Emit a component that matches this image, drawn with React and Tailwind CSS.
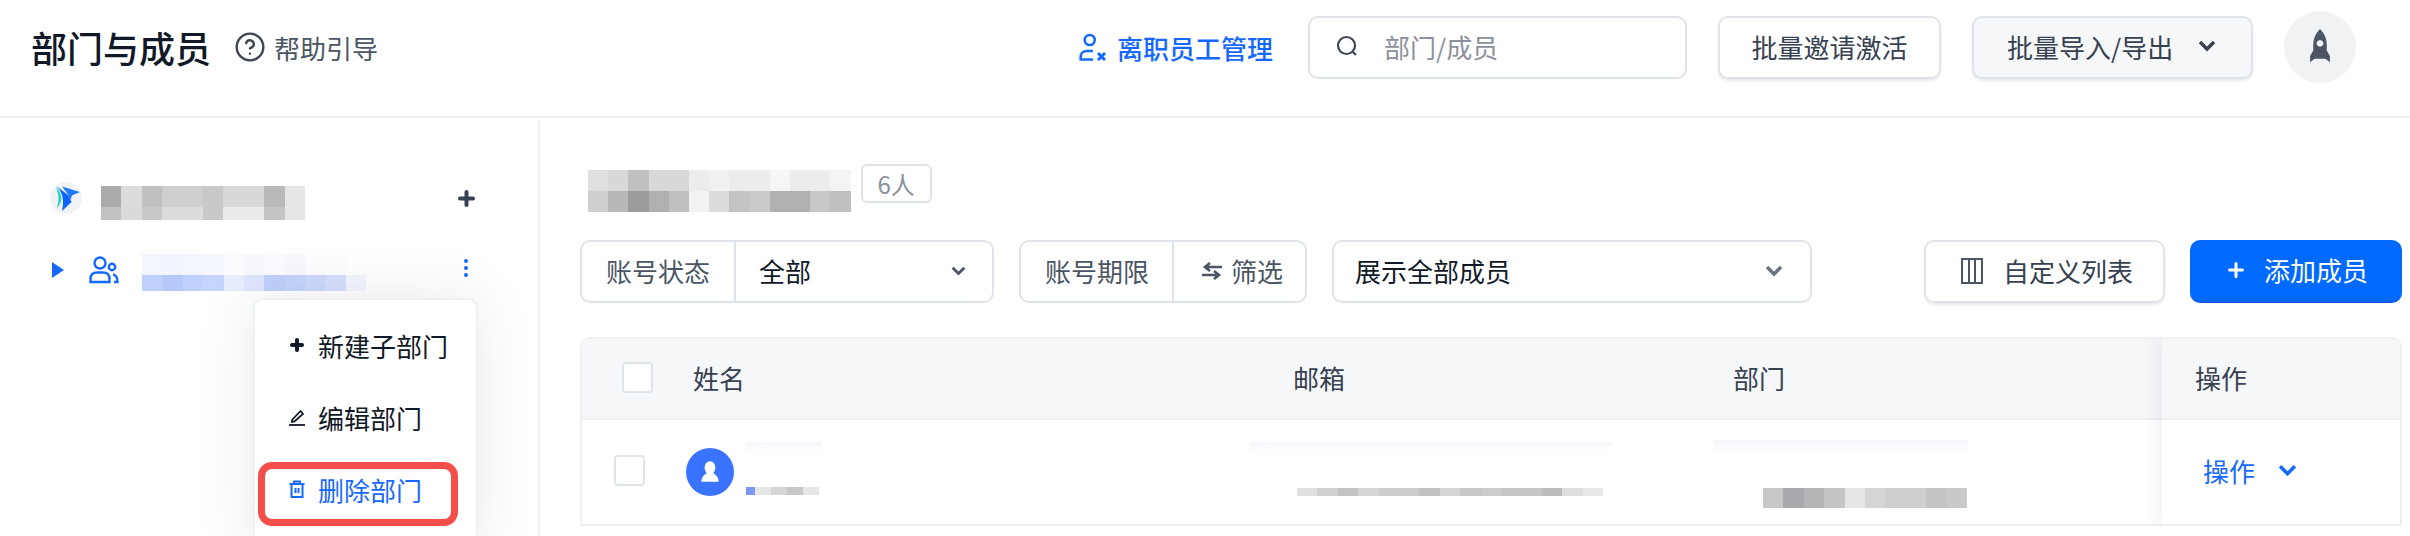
import { CircleHelp } from 'lucide-react'

const FONT = "font-['Noto_Sans_CJK_SC','Noto_Sans',sans-serif]"

// pixelated (redacted) text blocks: each row is [height, colours]
function Mosaic({ rows, cell = 20.4 }) {
  const width = Math.max(...rows.map(r => r[1].length)) * cell
  const height = rows.reduce((sum, r) => sum + r[0], 0)
  let y = 0
  return (
    <svg width={width} height={height} className="block shrink-0" shapeRendering="crispEdges">
      {rows.map(([h, colours], ri) => {
        const top = y
        y += h
        return colours.map((c, i) => <rect key={`${ri}-${i}`} x={i * cell} y={top} width={cell + 0.5} height={h} fill={c} />)
      })}
    </svg>
  )
}

const ORG_NAME = [
  [21, ['#ababab', '#dcdcdc', '#c0c0c0', '#cfcfcf', '#cfcfcf', '#c9c9c9', '#d8d8d8', '#d8d8d8', '#b9b9b9', '#e6e6e6']],
  [13, ['#c2c2c2', '#dadada', '#c8c8c8', '#dcdcdc', '#dcdcdc', '#c9c9c9', '#ebebeb', '#ebebeb', '#c4c4c4', '#e6e6e6']],
]
const DEPT_NAME = [
  [21, ['#f3f5ff', '#f2f5ff', '#f3f5ff', '#f5f7ff', '#fcfcff', '#f7f9ff', '#fbfbff', '#f7f9ff', '#fdfdff', '#fdfdff', '#ffffff']],
  [16, ['#c0d0fc', '#b6c9fb', '#c0d0fc', '#c5d4fc', '#e9eefe', '#dfe6fd', '#c0d0fc', '#c5d4fc', '#cdd9fc', '#d6e0fd', '#f4f6fe']],
]
const TITLE = [
  [21, ['#e0e0e0', '#d8d8d8', '#c0c0c0', '#d8d8d8', '#d8d8d8', '#ececec', '#f0f0f0', '#ececec', '#ececec', '#f6f6f6', '#ececec', '#ececec', '#f4f4f4']],
  [21, ['#cfcfcf', '#b8b8b8', '#9c9c9c', '#b0b0b0', '#c0c0c0', '#f2f2f2', '#dcdcdc', '#c4c4c4', '#cacaca', '#b0b0b0', '#b0b0b0', '#c8c8c8', '#c0c0c0']],
]
const ROW_NAME = [[8, ['#e6e6e6', '#d6d6d6', '#c8c8c8', '#e6e6e6']]]
const ROW_EMAIL = [[8, ['#e0e0e0', '#d0d0d0', '#c4c4c4', '#d6d6d6', '#cccccc', '#cccccc', '#c2c2c2', '#d4d4d4', '#c8c8c8', '#cccccc', '#c6c6c6', '#c6c6c6', '#bcbcbc', '#dedede', '#e8e8e8']]]
const ROW_DEPT = [[20, ['#c8c8ca', '#a8a9ac', '#b4b5b7', '#c4c5c7', '#e6e7e7', '#d4d5d7', '#cfcfd1', '#cfcfd1', '#c4c5c7', '#c8c9cb']]]

function Logo() {
  return (
    <div className="w-[32px] h-[32px] rounded-full bg-[#f0f2f5] shrink-0">
      <svg viewBox="0 0 32 32" width="32" height="32">
        <path d="M6 4.5 C9 13 9.5 19 6.5 26 C12 22 14 13 6 4.5Z" fill="#22d3c5" />
        <path d="M7 4.5 C12.5 10 14.5 19 12 29 L21.5 20 L18 13 Z" fill="#0f62ff" />
        <path d="M12 4.5 L30 10 L22 13.5 L20 19 L18 12.5 Z" fill="#1f7bff" />
      </svg>
    </div>
  )
}

function Rocket() {
  return (
    <svg viewBox="0 0 24 40" width="22" height="36" fill="#4b5563">
      <path fillRule="evenodd" d="M12 0 C17 5 19.5 11 19.5 17 V24 L23 30 V37 L18 33 H6 L1 37 V30 L4.5 24 V17 C4.5 11 7 5 12 0Z M12 12.2 a3.8 3.8 0 1 0 0.01 0Z" />
    </svg>
  )
}

function Box({ className = '', children }) {
  return <div className={`border-2 border-[#dfe4eb] rounded-[10px] ${className}`}>{children}</div>
}

function Chevron({ className = '' }) {
  return (
    <svg viewBox="0 0 18 12" className={className} fill="none" stroke="currentColor" strokeWidth="3.4">
      <path d="M2 2 L9 9 L16 2" />
    </svg>
  )
}

function Cross({ size, weight }) {
  return (
    <svg viewBox={`0 0 ${size} ${size}`} width={size} height={size} className="shrink-0" fill="none" stroke="currentColor" strokeWidth={weight} strokeLinecap="round">
      <path d={`M${weight / 2} ${size / 2} H${size - weight / 2} M${size / 2} ${weight / 2} V${size - weight / 2}`} />
    </svg>
  )
}

function Checkbox({ className = '' }) {
  return <div className={`w-[31px] h-[31px] bg-white border-2 border-[#dfe3ea] rounded-[4px] ${className}`} />
}

export default function App() {
  return (
    <div className={`relative h-[536px] w-full overflow-hidden bg-white text-[26px] ${FONT}`}>
      <header className="h-[118px] pb-[22px] border-b-2 border-[#eef0f4] flex items-center pl-[31px] pr-[54px]">
        <h1 className="text-[36px] font-medium text-[#111827]">部门与成员</h1>
        <CircleHelp className="ml-[23px] text-[#3f4651]" size={32} strokeWidth={1.8} />
        <span className="ml-[8px] text-[#4b5563]">帮助引导</span>

        <svg viewBox="0 0 30 30" width="30" height="30" className="ml-auto text-[#1669ff]" fill="none" stroke="currentColor" strokeWidth="2.6">
          <circle cx="11.7" cy="8" r="5" />
          <path d="M15 19 H9 C5 19 2.7 21.5 2.7 24.5 V27.5 H15" />
          <path d="M20 21 L27 28 M27 21 L20 28" strokeWidth="3" />
        </svg>
        <span className="ml-[9px] font-medium text-[#1669ff]">离职员工管理</span>

        <Box className="ml-[35px] w-[379px] h-[63px] flex items-center pl-[26px] pb-[2px]">
          <svg viewBox="0 0 22 22" width="22" height="22" fill="none" stroke="#3f4651" strokeWidth="2.2">
            <circle cx="10.5" cy="10.5" r="8.5" />
            <path d="M17 17 L20 20" />
          </svg>
          <span className="ml-[26px] text-[#8b909a]">部门/成员</span>
        </Box>

        <Box className="ml-[31px] w-[223px] h-[63px] flex items-center justify-center pb-[2px] text-[#374151] shadow-[0_2px_3px_rgba(31,41,55,0.1)]">
          批量邀请激活
        </Box>
        <Box className="ml-[31px] w-[281px] h-[63px] flex items-center pl-[33px] pb-[2px] bg-[#f6f7f9] text-[#374151] shadow-[0_2px_3px_rgba(31,41,55,0.1)]">
          批量导入/导出
          <Chevron className="ml-[25px] w-[18px] h-[12px]" />
        </Box>
        <div className="ml-[31px] w-[72px] h-[72px] rounded-full bg-[#f1f2f4] flex items-center justify-center">
          <Rocket />
        </div>
      </header>

      <div className="flex h-[418px]">
        <aside className="mt-[2px] w-[540px] shrink-0 border-r-2 border-[#eef0f4] pt-[42px]">
          <div className="h-[72px] flex items-center pl-[50px] pr-[63px] text-[#374151]">
            <Logo />
            <div className="ml-[19px] mt-[10px]"><Mosaic rows={ORG_NAME} /></div>
            <div className="ml-auto"><Cross size={17} weight={4} /></div>
          </div>
          <div className="h-[72px] flex items-center pl-[52px] pr-[70px]">
            <svg viewBox="0 0 12 16" width="12" height="16" fill="#1669ff"><path d="M0 0 L12 8 L0 16Z" /></svg>
            <svg viewBox="0 0 30 28" width="30" height="28" className="ml-[25px]" fill="none" stroke="#1669ff" strokeWidth="2.4">
              <circle cx="11" cy="7" r="5.5" />
              <path d="M1.5 26 V23 C1.5 19 4 16.5 8 16.5 H14 C18 16.5 20.5 19 20.5 23 V26 Z" />
              <circle cx="23" cy="11" r="3.2" />
              <path d="M24 18.5 C27 19 28.5 21.5 28.5 26 H25" />
            </svg>
            <div className="ml-[23px] mt-[4px]"><Mosaic rows={DEPT_NAME} /></div>
            <div className="ml-auto flex flex-col gap-[3px] -mt-[4px]">
              <i className="block w-[4px] h-[4px] rounded-full bg-[#1669ff]" />
              <i className="block w-[4px] h-[4px] rounded-full bg-[#1669ff]" />
              <i className="block w-[4px] h-[4px] rounded-full bg-[#1669ff]" />
            </div>
          </div>
        </aside>

        <main className="flex-1 min-w-0 pl-[40px] pr-[8px] pt-[46px]">
          <div className="h-[48px] flex items-start pl-[8px]">
            <div className="mt-[6px]"><Mosaic rows={TITLE} cell={20.2} /></div>
            <Box className="ml-[10px] w-[71px] h-[39px] flex items-center justify-center !rounded-[6px] text-[24px] text-[#8b909a]">6人</Box>
          </div>

          <div className="mt-[28px] h-[63px] flex gap-[25px]">
            <Box className="w-[414px] flex items-stretch">
              <div className="w-[154px] border-r-2 border-[#dfe4eb] flex items-center pl-[24px] pb-[2px] text-[#4b5563]">账号状态</div>
              <div className="flex-1 flex items-center pl-[23px] pr-[26px] pb-[2px] text-[#111827]">
                全部
                <Chevron className="ml-auto w-[15px] h-[10px] text-[#4b5563]" />
              </div>
            </Box>
            <Box className="w-[288px] flex items-stretch">
              <div className="w-[153px] border-r-2 border-[#dfe4eb] flex items-center pl-[24px] pb-[2px] text-[#4b5563]">账号期限</div>
              <div className="flex-1 flex items-center pl-[28px] pb-[2px] text-[#4b5563]">
                <svg viewBox="0 0 20 18" width="20" height="18" fill="none" stroke="currentColor" strokeWidth="2.6">
                  <path d="M20 5 H4 M8 1 L3 5 L8 9" />
                  <path d="M0 13 H16 M12 9 L17 13 L12 17" />
                </svg>
                <span className="ml-[9px]">筛选</span>
              </div>
            </Box>
            <Box className="w-[480px] flex items-center pl-[21px] pr-[27px] pb-[2px] text-[#111827]">
              展示全部成员
              <Chevron className="ml-auto w-[18px] h-[12px] text-[#6b7280]" />
            </Box>
            <Box className="ml-auto w-[241px] flex items-center pl-[35px] pb-[2px] text-[#374151] shadow-[0_2px_3px_rgba(31,41,55,0.1)]">
              <svg viewBox="0 0 22 26" width="22" height="26" fill="none" stroke="#4b5563" strokeWidth="2">
                <rect x="1" y="1" width="20" height="24" />
                <path d="M8 1 V25 M14 1 V25" />
              </svg>
              <span className="ml-[20px]">自定义列表</span>
            </Box>
            <div className="w-[212px] flex items-center pl-[38px] pb-[2px] rounded-[10px] bg-[#006aff] border-b-2 border-[#0f5be0] text-white">
              <Cross size={16} weight={3} />
              <span className="ml-[20px]">添加成员</span>
            </div>
          </div>

          <div className="mt-[34px] flex border-2 border-b-0 border-[#eef0f4] rounded-t-[10px] overflow-hidden">
            <div className="flex-1 min-w-0">
              <div className="h-[81px] pb-[3px] bg-[#f6f7f9] border-b-2 border-[#eef0f4] grid grid-cols-[111px_600px_440px_1fr] items-center text-[#374151]">
                <div className="pl-[40px]"><Checkbox /></div>
                <div>姓名</div>
                <div>邮箱</div>
                <div>部门</div>
              </div>
              <div className="h-[106px] border-b-2 border-[#eef0f4] grid grid-cols-[104px_564px_464px_1fr] items-start">
                <div className="pl-[32px] mt-[35px]"><Checkbox /></div>
                <div className="mt-[28px] flex items-start">
                  <div className="w-[48px] h-[48px] rounded-full bg-[#3a73ff] flex items-center justify-center shrink-0">
                    <svg viewBox="0 0 24 24" width="26" height="26" fill="white">
                      <ellipse cx="12" cy="8" rx="5" ry="6" />
                      <path d="M12 12 C7 13 4 17 4 21 H20 C20 17 17 13 12 12Z" />
                    </svg>
                  </div>
                  <div className="ml-[12px] w-[75px] h-[54px] -mt-[6px] bg-gradient-to-b from-[#f6f6fb] to-white to-[18%] flex items-end">
                    <div className="w-[9px] h-[8px] bg-[#7c98f5] mb-[1px]" />
                    <div className="mb-[1px]"><Mosaic rows={ROW_NAME} cell={16} /></div>
                  </div>
                </div>
                <div className="mt-[22px] h-[54px] w-[362px] bg-gradient-to-b from-[#f6f6fb] to-white to-[18%] flex items-end pl-[47px]">
                  <Mosaic rows={ROW_EMAIL} />
                </div>
                <div className="mt-[20px] h-[68px] w-[254px] bg-gradient-to-b from-[#f5f5fb] to-white to-[18%] flex items-end pl-[49px]">
                  <Mosaic rows={ROW_DEPT} />
                </div>
              </div>
            </div>
            <div className="w-[238px] shrink-0 shadow-[-8px_0_14px_rgba(31,41,55,0.05)] z-10">
              <div className="h-[81px] pb-[3px] bg-[#f6f7f9] border-b-2 border-[#eef0f4] flex items-center pl-[33px] text-[#374151]">操作</div>
              <div className="h-[106px] pb-[4px] border-b-2 border-[#eef0f4] flex items-center pl-[41px] text-[#1669ff]">
                操作
                <Chevron className="ml-[23px] w-[19px] h-[13px]" />
              </div>
            </div>
          </div>
        </main>
      </div>

      {/* popup menu of the department row */}
      <div className="absolute left-[253px] top-[298px] w-[225px] h-[260px] pt-[9px] pl-[33px] bg-white border-2 border-[#eef0f4] rounded-[10px] shadow-[0_0_60px_rgba(31,41,55,0.1)] text-[#111827]">
        <div className="h-[72px] flex items-center">
          <div className="w-[18px] flex justify-center"><Cross size={14} weight={4} /></div>
          <span className="ml-[12px]">新建子部门</span>
        </div>
        <div className="h-[72px] flex items-center">
          <svg viewBox="0 0 18 18" width="18" height="18" fill="none" stroke="currentColor" strokeWidth="1.8">
            <path d="M4 12 L4 14 L6.5 13.5 L15 6 L12.5 3 Z" />
            <path d="M1 17 H17" />
          </svg>
          <span className="ml-[12px]">编辑部门</span>
        </div>
        <div className="h-[72px] flex items-center text-[#1669ff]">
          <svg viewBox="0 0 18 18" width="18" height="18" fill="none" stroke="currentColor" strokeWidth="2">
            <path d="M1.5 4 H16.5 M6 4 V1.5 H12 V4 M3.5 4 V17 H14.5 V4 M7.5 8 V13 M10.5 8 V13" />
          </svg>
          <span className="ml-[12px]">删除部门</span>
        </div>
        <div className="absolute left-[3px] top-[162px] w-[200px] h-[64px] border-[7px] border-[#f54d4a] rounded-[14px]" />
      </div>
    </div>
  )
}
